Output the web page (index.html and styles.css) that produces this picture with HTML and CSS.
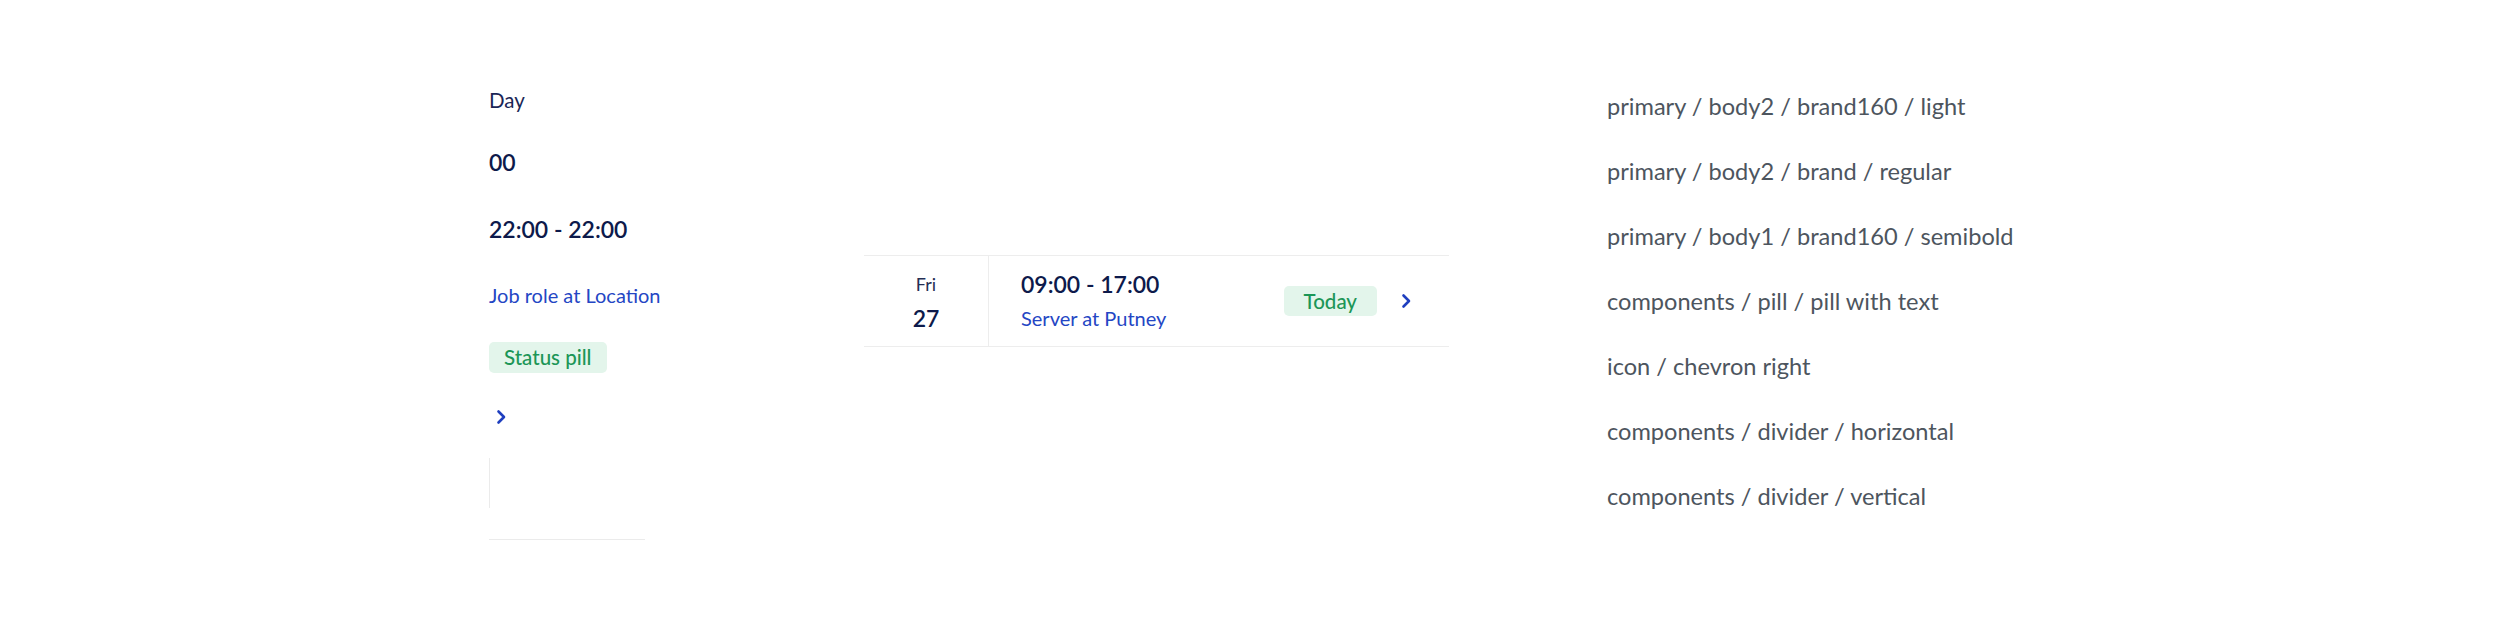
FILE: index.html
```html
<!DOCTYPE html>
<html lang="en">
<head>
<meta charset="utf-8">
<title>Shift row components</title>
<link rel="stylesheet" href="styles.css">
</head>
<body>
<div class="page">
  <div class="parts">
    <div class="day">Day</div>
    <div class="num">00</div>
    <div class="time">22:00 - 22:00</div>
    <div class="role">Job role at Location</div>
    <div class="pill pill-left">Status pill</div>
    <div class="chev chev-left">
      <svg width="24" height="24" viewBox="0 0 24 24"><path d="M9.5 6.5l5.5 5.5-5.5 5.5" fill="none" stroke="#1f3fbf" stroke-width="2.6" stroke-linecap="round" stroke-linejoin="round"/></svg>
    </div>
    <div class="vdiv"></div>
    <div class="hdiv"></div>
  </div>

  <div class="card">
    <div class="date">
      <div class="dname">Fri</div>
      <div class="dnum">27</div>
    </div>
    <div class="info">
      <div class="itime">09:00 - 17:00</div>
      <div class="irole">Server at Putney</div>
    </div>
    <div class="pill pill-card">Today</div>
    <div class="chev chev-card">
      <svg width="24" height="24" viewBox="0 0 24 24"><path d="M9.5 6.5l5.5 5.5-5.5 5.5" fill="none" stroke="#1f3fbf" stroke-width="2.6" stroke-linecap="round" stroke-linejoin="round"/></svg>
    </div>
  </div>

  <div class="legend">
    <div class="lrow">primary / body2 / brand160 / light</div>
    <div class="lrow">primary / body2 / brand / regular</div>
    <div class="lrow">primary / body1 / brand160 / semibold</div>
    <div class="lrow">components / pill / pill with text</div>
    <div class="lrow">icon / chevron right</div>
    <div class="lrow">components / divider / horizontal</div>
    <div class="lrow">components / divider / vertical</div>
  </div>
</div>
</body>
</html>
```
FILE: styles.css
```css
html, body {
  margin: 0;
  padding: 0;
  background: #ffffff;
}

body {
  font-family: "Lato", "Liberation Sans", sans-serif;
  color: #0f1b4c;
}

.page {
  display: flex;
  align-items: flex-start;
  padding-left: 489px;
  width: 2500px;
  height: 625px;
  box-sizing: border-box;
}

/* left column: component parts */
.parts {
  width: 156px;
  padding-top: 88px;
  display: flex;
  flex-direction: column;
  align-items: flex-start;
}

.day {
  font-size: 20.5px;
  line-height: 24px;
  font-weight: 400;
  color: #1a2656;
}

.num,
.time {
  font-size: 23px;
  line-height: 26px;
  font-weight: 600;
  color: #0d1a4b;
}

.num { margin-top: 37px; }
.time { margin-top: 41px; }

.role {
  margin-top: 40px;
  font-size: 20px;
  line-height: 26px;
  font-weight: 400;
  color: #2446c4;
  white-space: nowrap;
}

.pill {
  height: 30px;
  padding: 0 18px;
  border-radius: 5px;
  background: #e3f5eb;
  color: #1c9657;
  font-size: 20px;
  font-weight: 500;
  line-height: 30px;
  white-space: nowrap;
}

.pill-left {
  margin-top: 34px;
  height: 31px;
  line-height: 31px;
  padding: 0 15px;
  font-size: 20.5px;
}

.pill-card {
  padding: 0 20px;
  font-size: 20.5px;
}

.chev {
  width: 24px;
  height: 24px;
}

.chev svg { display: block; }

.chev-left { margin-top: 32px; }

.vdiv {
  margin-top: 29px;
  width: 1px;
  height: 50px;
  background: #ebebeb;
}

.hdiv {
  margin-top: 31px;
  width: 156px;
  height: 1px;
  background: #ebebeb;
}

/* middle: shift row card */
.card {
  margin-left: 219px;
  margin-top: 255px;
  width: 585px;
  height: 92px;
  box-sizing: border-box;
  border-top: 1px solid #ededed;
  border-bottom: 1px solid #ededed;
  display: flex;
  align-items: center;
  padding-right: 31px;
}

.date {
  width: 125px;
  height: 100%;
  box-sizing: border-box;
  border-right: 1px solid #ededed;
  display: flex;
  flex-direction: column;
  align-items: center;
  justify-content: center;
  gap: 4px;
}

.dname {
  font-size: 18px;
  line-height: 30px;
  font-weight: 400;
  color: #252e54;
}

.dnum {
  font-size: 23px;
  line-height: 30px;
  font-weight: 600;
  color: #0d1a4b;
}

.info {
  flex: 1;
  padding-left: 32px;
  display: flex;
  flex-direction: column;
  gap: 4px;
}

.itime {
  font-size: 23px;
  line-height: 30px;
  font-weight: 600;
  color: #0d1a4b;
}

.irole {
  font-size: 20px;
  line-height: 30px;
  font-weight: 400;
  color: #2446c4;
}

.chev-card { margin-left: 17px; }

/* right: legend */
.legend {
  margin-left: 158px;
  margin-top: 74px;
  display: flex;
  flex-direction: column;
}

.lrow {
  font-size: 23.6px;
  line-height: 65px;
  height: 65px;
  color: #4d555e;
  white-space: nowrap;
}
```
